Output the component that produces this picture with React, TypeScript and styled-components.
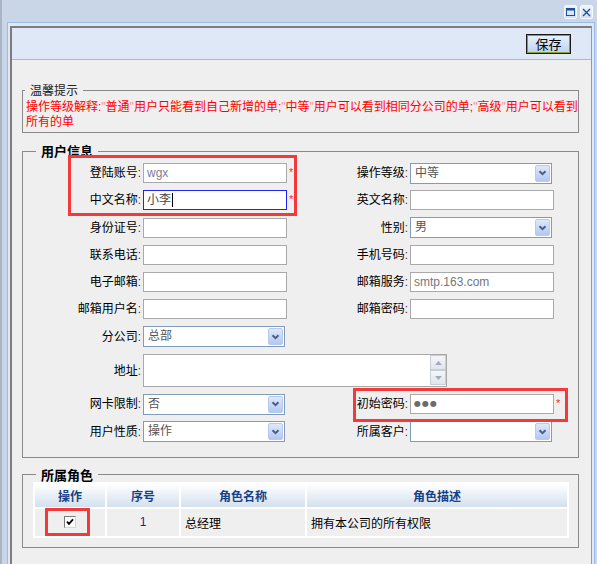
import React from "react";
import styled, { createGlobalStyle } from "styled-components";

const GlobalStyle = createGlobalStyle`
  html, body {
    margin: 0;
    padding: 0;
  }
  body {
    background: #c8d6e8;
    font-family: "Liberation Sans", "Noto Sans CJK SC", sans-serif;
    font-size: 12px;
    color: #000;
    overflow: hidden;
  }
`;

const Window = styled.div`
  position: relative;
  width: 597px;
  height: 564px;
  background: #c8d6e8;
  box-shadow: inset 2px 0 0 #aab4c2;
  overflow: hidden;
`;

const TitleBar = styled.div`
  height: 22px;
  box-sizing: border-box;
  display: flex;
  justify-content: flex-end;
  align-items: flex-start;
  gap: 3px;
  padding: 5px 4px 0 0;
`;

const WinButton = styled.span`
  width: 13px;
  height: 14px;
  box-sizing: border-box;
  border: 1px solid #f6f9fd;
  border-radius: 2px;
  background: linear-gradient(#eef3fa, #d2def0);
  display: flex;
  align-items: center;
  justify-content: center;
`;

const Panel = styled.div`
  margin-left: 7px;
  width: 588px;
  height: 542px;
  box-sizing: border-box;
  border: 1px solid #99bbe8;
  border-bottom: none;
  background: #dfe8f6;
  padding: 3px 2px 0 2px;
`;

const Inner = styled.div`
  height: 100%;
  box-sizing: border-box;
  border-top: 2px solid #7d7d7d;
  border-left: 2px solid #7d7d7d;
  border-right: 1px solid #9a9a9a;
  display: flex;
  flex-direction: column;
`;

const Toolbar = styled.div`
  height: 32px;
  box-sizing: border-box;
  background: #dfe8f6;
  border-bottom: 1px solid #99bbe8;
  display: flex;
  justify-content: flex-end;
  align-items: center;
  padding-right: 20px;
`;

const SaveButton = styled.button`
  width: 45px;
  height: 20px;
  padding: 0;
  border: 1px solid #1a1a1a;
  box-shadow: inset 0 0 0 1px #8e9c3c;
  background: linear-gradient(#e9f2fc, #b9d3ef);
  font-family: "Noto Sans CJK SC", sans-serif;
  font-size: 13px;
  line-height: 16px;
  color: #000;
`;

const Body = styled.div`
  flex: 1;
  background: #efefef;
  padding: 23px 0 0 10px;
`;

const Group = styled.fieldset<{ $pad: string; $mb: number }>`
  margin: 0 0 ${(p) => p.$mb}px 0;
  width: 557px;
  box-sizing: border-box;
  min-width: 0;
  border: 1px solid #8a8a8a;
  padding: ${(p) => p.$pad};
`;

const Legend = styled.legend<{ $ml: number; $bold?: boolean }>`
  margin-left: ${(p) => p.$ml}px;
  padding: 0 5px;
  font-family: "Noto Sans CJK SC", sans-serif;
  font-size: ${(p) => (p.$bold ? 13 : 12)}px;
  font-weight: ${(p) => (p.$bold ? 700 : 400)};
  line-height: 14px;
  color: ${(p) => (p.$bold ? "#000" : "#222")};
`;

const HintLine = styled.div`
  color: #ff0000;
  font-size: 12px;
  line-height: 15px;
  white-space: nowrap;
`;

const Quote = styled.span`
  color: #ff9090;
`;

const FormGrid = styled.div`
  display: grid;
  grid-template-columns: 120px 209px 58px 168px;
  grid-template-rows: repeat(7, 20px) 33px 20px 20px;
  row-gap: 7.3px;
  align-items: center;
`;

const Label = styled.div`
  text-align: right;
  padding-right: 2px;
  white-space: nowrap;
  font-size: 12px;
  line-height: 20px;
  color: #000;
`;

const Colon = styled.span`
  color: #7a1a1a;
`;

const Field = styled.div<{ $span?: boolean }>`
  display: flex;
  align-items: center;
  height: 100%;
  grid-column: ${(p) => (p.$span ? "2 / 5" : "auto")};
`;

const TextBox = styled.div<{ $focus?: boolean; $color?: string }>`
  width: 144px;
  height: 20px;
  box-sizing: border-box;
  border: 1px solid ${(p) => (p.$focus ? "#1f24f0" : "#a9a9a9")};
  background: #fff;
  padding-left: 3px;
  display: flex;
  align-items: center;
  font-size: 12px;
  line-height: 18px;
  color: ${(p) => p.$color || "#555"};
`;

const Caret = styled.span`
  width: 1px;
  height: 14px;
  background: #000;
  margin-left: 1px;
`;

const Dots = styled.span`
  font-family: "DejaVu Sans", sans-serif;
  font-size: 8px;
  letter-spacing: 1px;
  color: #6a6a72;
`;

const Required = styled.span`
  color: #ff2a2a;
  font-size: 11px;
  line-height: 11px;
  margin-left: 2px;
  margin-top: -2px;
`;

const SelectBox = styled.div`
  width: 142px;
  height: 21px;
  box-sizing: border-box;
  border: 1px solid #7f9db9;
  background: #fff;
  display: flex;
  align-items: center;
  justify-content: space-between;
  padding: 1px;
`;

const SelectValue = styled.span`
  padding-left: 3px;
  font-size: 12px;
  line-height: 17px;
  color: #555;
`;

const SelectArrow = styled.span`
  width: 15px;
  height: 17px;
  box-sizing: border-box;
  border: 1px solid #b8c9ee;
  border-radius: 2px;
  background: linear-gradient(#dfe8fc, #b3c7f3);
  display: flex;
  align-items: center;
  justify-content: center;
`;

const AreaBox = styled.div`
  width: 304px;
  height: 33px;
  box-sizing: border-box;
  border: 1px solid #a9a9a9;
  background: #fff;
  display: flex;
  justify-content: flex-end;
`;

const ScrollCol = styled.div`
  width: 16px;
  display: flex;
  flex-direction: column;
`;

const ScrollBtn = styled.span`
  height: 15px;
  box-sizing: border-box;
  border: 1px solid #c9ced6;
  background: linear-gradient(#f4f6f9, #e1e6ee);
  display: flex;
  align-items: center;
  justify-content: center;
`;

const RoleTable = styled.table`
  border-collapse: separate;
  border-spacing: 2px;
  background: #fff;
  width: 536px;
  table-layout: fixed;
`;

const HeadCell = styled.th<{ $w: number }>`
  width: ${(p) => p.$w}px;
  height: 23px;
  padding: 0;
  background: linear-gradient(#ffffff, #d3e0ed);
  color: #15428b;
  font-family: "Noto Sans CJK SC", sans-serif;
  font-size: 12px;
  font-weight: 700;
  text-align: center;
`;

const Cell = styled.td<{ $center?: boolean }>`
  height: 27px;
  padding: 0 4px;
  background: #efefef;
  font-size: 12px;
  text-align: ${(p) => (p.$center ? "center" : "left")};
  vertical-align: middle;
`;

const Num = styled.span`
  color: #3b1496;
`;

const CheckMark = styled.span`
  display: inline-flex;
  width: 12px;
  height: 12px;
  box-sizing: border-box;
  border-top: 1px solid #7c7c7c;
  border-left: 1px solid #7c7c7c;
  border-right: 1px solid #d6d6d6;
  border-bottom: 1px solid #d6d6d6;
  background: #fff;
  align-items: center;
  justify-content: center;
  vertical-align: middle;
  margin-top: -2px;
`;

const Highlight = styled.div<{ $x: number; $y: number; $w: number; $h: number }>`
  position: absolute;
  left: ${(p) => p.$x}px;
  top: ${(p) => p.$y}px;
  width: ${(p) => p.$w}px;
  height: ${(p) => p.$h}px;
  box-sizing: border-box;
  border: 3px solid #f23a3a;
  pointer-events: none;
`;

function Chevron() {
  return (
    <svg width="9" height="6" viewBox="0 0 9 6">
      <path d="M1.5 1.2 L4.5 4.2 L7.5 1.2" fill="none" stroke="#4a5f86" strokeWidth="2" />
    </svg>
  );
}

function Select({ value }: { value?: string }) {
  return (
    <SelectBox>
      <SelectValue>{value}</SelectValue>
      <SelectArrow>
        <Chevron />
      </SelectArrow>
    </SelectBox>
  );
}

function Lbl({ text }: { text: string }) {
  return (
    <Label>
      {text}
      <Colon>:</Colon>
    </Label>
  );
}

function App() {
  return (
    <Window>
      <GlobalStyle />
      <TitleBar>
        <WinButton>
          <svg width="9" height="8" viewBox="0 0 9 8">
            <rect x="0.5" y="0.5" width="8" height="7" fill="none" stroke="#1f4fa3" />
            <rect x="0" y="0" width="9" height="2.5" fill="#1f4fa3" />
          </svg>
        </WinButton>
        <WinButton>
          <svg width="9" height="9" viewBox="0 0 9 9">
            <path d="M1 1 L8 8 M8 1 L1 8" stroke="#1f4fa3" strokeWidth="1.4" />
          </svg>
        </WinButton>
      </TitleBar>
      <Panel>
        <Inner>
          <Toolbar>
            <SaveButton>保存</SaveButton>
          </Toolbar>
          <Body>
            <Group $pad="3px 3px 2px 3px" $mb={11}>
              <Legend $ml={-1}>温馨提示</Legend>
              <HintLine>
                操作等级解释:<Quote>"</Quote>普通<Quote>"</Quote>用户只能看到自己新增的单;<Quote>"</Quote>中等
                <Quote>"</Quote>用户可以看到相同分公司的单;<Quote>"</Quote>高级<Quote>"</Quote>用户可以看到
              </HintLine>
              <HintLine>所有的单</HintLine>
            </Group>

            <Group $pad="5px 0 15px 0" $mb={10}>
              <Legend $ml={13} $bold>
                用户信息
              </Legend>
              <FormGrid>
                <Lbl text="登陆账号" />
                <Field>
                  <TextBox $color="#7c7e9a">wgx</TextBox>
                  <Required>*</Required>
                </Field>
                <Lbl text="操作等级" />
                <Field>
                  <Select value="中等" />
                </Field>

                <Lbl text="中文名称" />
                <Field>
                  <TextBox $focus $color="#444">
                    小李
                    <Caret />
                  </TextBox>
                  <Required>*</Required>
                </Field>
                <Lbl text="英文名称" />
                <Field>
                  <TextBox />
                </Field>

                <Lbl text="身份证号" />
                <Field>
                  <TextBox />
                </Field>
                <Lbl text="性别" />
                <Field>
                  <Select value="男" />
                </Field>

                <Lbl text="联系电话" />
                <Field>
                  <TextBox />
                </Field>
                <Lbl text="手机号码" />
                <Field>
                  <TextBox />
                </Field>

                <Lbl text="电子邮箱" />
                <Field>
                  <TextBox />
                </Field>
                <Lbl text="邮箱服务" />
                <Field>
                  <TextBox $color="#777">smtp.163.com</TextBox>
                </Field>

                <Lbl text="邮箱用户名" />
                <Field>
                  <TextBox />
                </Field>
                <Lbl text="邮箱密码" />
                <Field>
                  <TextBox />
                </Field>

                <Lbl text="分公司" />
                <Field>
                  <Select value="总部" />
                </Field>
                <div />
                <div />

                <Lbl text="地址" />
                <Field $span>
                  <AreaBox>
                    <ScrollCol>
                      <ScrollBtn>
                        <svg width="7" height="4" viewBox="0 0 7 4">
                          <path d="M0 4 L3.5 0 L7 4 Z" fill="#a3abb9" />
                        </svg>
                      </ScrollBtn>
                      <ScrollBtn>
                        <svg width="7" height="4" viewBox="0 0 7 4">
                          <path d="M0 0 L3.5 4 L7 0 Z" fill="#a3abb9" />
                        </svg>
                      </ScrollBtn>
                    </ScrollCol>
                  </AreaBox>
                </Field>

                <Lbl text="网卡限制" />
                <Field>
                  <Select value="否" />
                </Field>
                <Lbl text="初始密码" />
                <Field>
                  <TextBox>
                    <Dots>●●●</Dots>
                  </TextBox>
                  <Required>*</Required>
                </Field>

                <Lbl text="用户性质" />
                <Field>
                  <Select value="操作" />
                </Field>
                <Lbl text="所属客户" />
                <Field>
                  <Select />
                </Field>
              </FormGrid>
            </Group>

            <Group $pad="0 0 9px 10px" $mb={0}>
              <Legend $ml={3} $bold>
                所属角色
              </Legend>
              <RoleTable>
                <thead>
                  <tr>
                    <HeadCell $w={70}>操作</HeadCell>
                    <HeadCell $w={72}>序号</HeadCell>
                    <HeadCell $w={124}>角色名称</HeadCell>
                    <HeadCell $w={260}>角色描述</HeadCell>
                  </tr>
                </thead>
                <tbody>
                  <tr>
                    <Cell $center>
                      <CheckMark>
                        <svg width="8" height="8" viewBox="0 0 8 8">
                          <path d="M1 3.6 L3 5.8 L7 1.4" fill="none" stroke="#000" strokeWidth="1.8" />
                        </svg>
                      </CheckMark>
                    </Cell>
                    <Cell $center>
                      <Num>1</Num>
                    </Cell>
                    <Cell>总经理</Cell>
                    <Cell>拥有本公司的所有权限</Cell>
                  </tr>
                </tbody>
              </RoleTable>
            </Group>
          </Body>
        </Inner>
      </Panel>

      <Highlight $x={68} $y={155} $w={229} $h={61} />
      <Highlight $x={353} $y={388} $w={215} $h={34} />
      <Highlight $x={45} $y={508} $w={45} $h={28} />
    </Window>
  );
}

export default App;
